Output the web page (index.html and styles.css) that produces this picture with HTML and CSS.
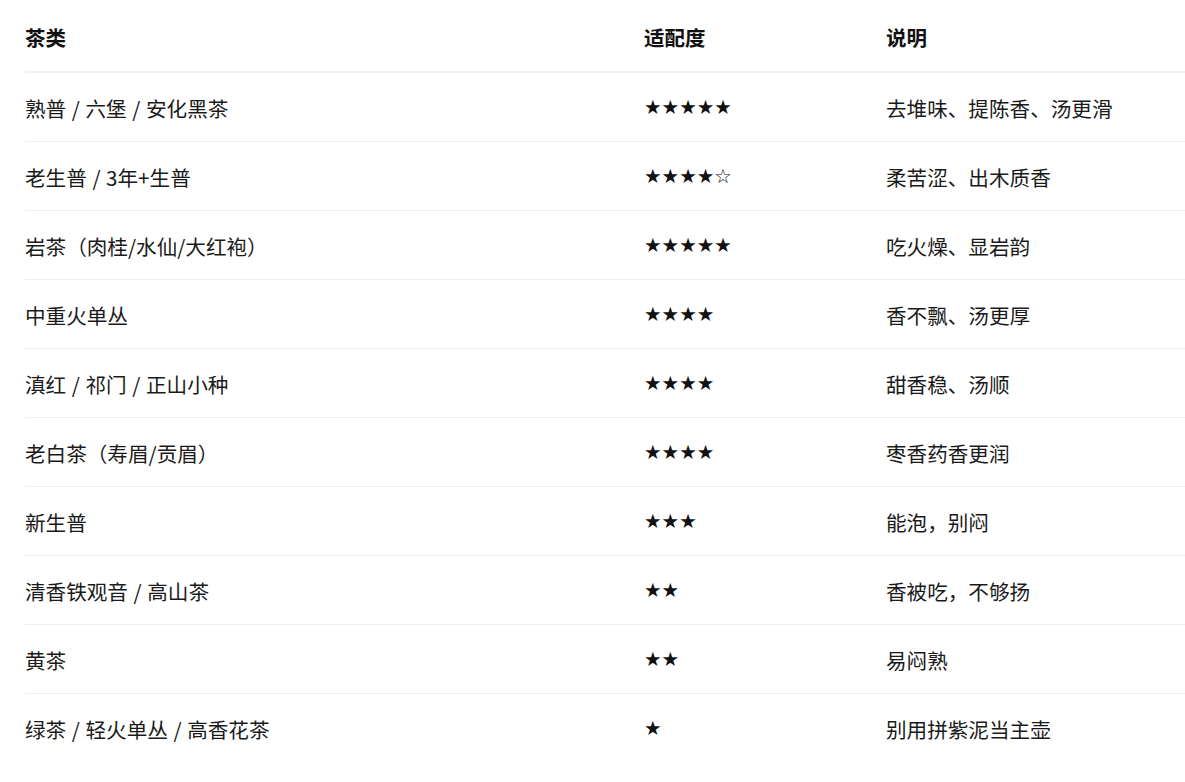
FILE: index.html
```html
<!DOCTYPE html>
<html lang="zh">
<head>
<meta charset="utf-8">
<link rel="stylesheet" href="styles.css">
</head>
<body>
<div class="wrap">
<table class="tea">
  <colgroup><col class="c1"><col class="c2"><col class="c3"></colgroup>
  <thead>
    <tr><th>茶类</th><th>适配度</th><th>说明</th></tr>
  </thead>
  <tbody>
    <tr><td>熟普 / 六堡 / 安化黑茶</td><td class="stars">★★★★★</td><td>去堆味、提陈香、汤更滑</td></tr>
    <tr><td>老生普 / 3年+生普</td><td class="stars">★★★★☆</td><td>柔苦涩、出木质香</td></tr>
    <tr><td>岩茶（肉桂/水仙/大红袍）</td><td class="stars">★★★★★</td><td>吃火燥、显岩韵</td></tr>
    <tr><td>中重火单丛</td><td class="stars">★★★★</td><td>香不飘、汤更厚</td></tr>
    <tr><td>滇红 / 祁门 / 正山小种</td><td class="stars">★★★★</td><td>甜香稳、汤顺</td></tr>
    <tr><td>老白茶（寿眉/贡眉）</td><td class="stars">★★★★</td><td>枣香药香更润</td></tr>
    <tr><td>新生普</td><td class="stars">★★★</td><td>能泡，别闷</td></tr>
    <tr><td>清香铁观音 / 高山茶</td><td class="stars">★★</td><td>香被吃，不够扬</td></tr>
    <tr><td>黄茶</td><td class="stars">★★</td><td>易闷熟</td></tr>
    <tr><td>绿茶 / 轻火单丛 / 高香花茶</td><td class="stars">★</td><td>别用拼紫泥当主壶</td></tr>
  </tbody>
</table>
</div>
</body>
</html>
```
FILE: styles.css
```css
html, body {
  margin: 0;
  padding: 0;
  background: #ffffff;
}
body {
  font-family: "Noto Sans CJK SC", "Noto Sans", "Liberation Sans", sans-serif;
  color: #1a1a1a;
  overflow: hidden;
}
.wrap {
  padding-left: 25px;
}
.tea {
  width: 1160px;
  border-collapse: collapse;
  table-layout: fixed;
}
.c1 { width: 619px; }
.c2 { width: 242px; }
.c3 { width: 299px; }
.tea th {
  text-align: left;
  font-size: 20.5px;
  font-weight: 700;
  line-height: 30px;
  padding: 22px 0 19px 0;
  border-bottom: 2px solid #f0f0f0;
  color: #111;
}
.tea td {
  font-size: 20.6px;
  line-height: 30px;
  padding: 20px 0 18px 0;
  border-bottom: 1px solid #efefef;
  white-space: nowrap;
  word-spacing: 1px;
}
.tea tbody tr:last-child td {
  border-bottom: none;
}
.tea td.stars {
  font-family: "DejaVu Sans", sans-serif;
  font-size: 19.6px;
  word-spacing: 0;
  color: #111;
}
```
